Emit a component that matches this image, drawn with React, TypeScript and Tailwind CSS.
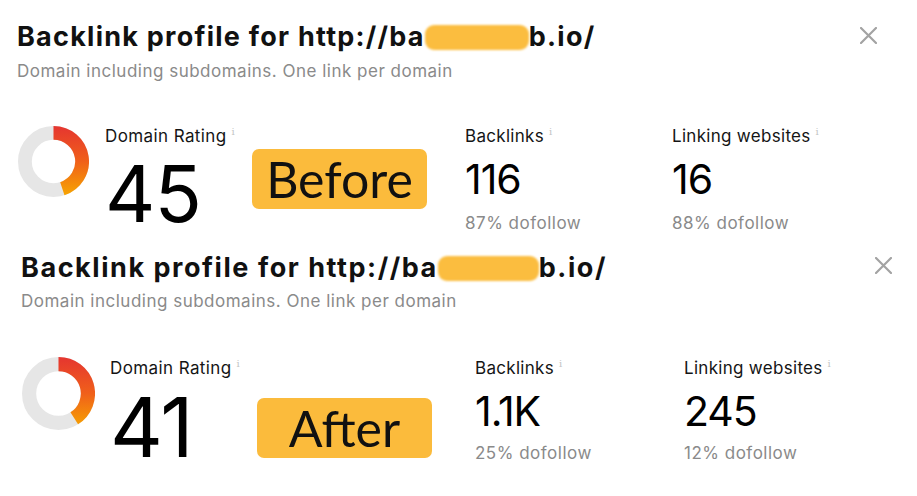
type Metric = {
  label: string;
  value: string;
  note: string;
};

type PanelConfig = {
  rating: number;
  tag: string;
  metrics: Metric[];
  wrap: string;
  title: string;
  close: string;
  blob: string;
  sub: string;
  grid: string;
  donut: number;
  donutOffset: string;
  bigNumber: string;
  badge: string;
  value: string;
  note: string;
};

const PANELS: PanelConfig[] = [
  {
    rating: 45,
    tag: "Before",
    metrics: [
      { label: "Backlinks", value: "116", note: "87% dofollow" },
      { label: "Linking websites", value: "16", note: "88% dofollow" },
    ],
    wrap: "h-[231px] pl-[17px] pr-[40px] pt-[21px]",
    title: "tracking-[1.25px]",
    close: "mt-[6px]",
    blob: "w-[104px]",
    sub: "mt-[6px]",
    grid: "mt-[41px] grid-cols-[88px_147px_213px_207px_1fr]",
    donut: 71,
    donutOffset: "mt-[2px]",
    bigNumber: "mt-[7px] text-[78px]",
    badge: "mt-[25px] h-[60px] w-[175px]",
    value: "mt-[11px]",
    note: "mt-[11px]",
  },
  {
    rating: 41,
    tag: "After",
    metrics: [
      { label: "Backlinks", value: "1.1K", note: "25% dofollow" },
      { label: "Linking websites", value: "245", note: "12% dofollow" },
    ],
    wrap: "h-[265px] pl-[21px] pr-[25px] pt-[21px]",
    title: "tracking-[1.55px]",
    close: "mt-[5px]",
    blob: "w-[101px]",
    sub: "mt-[5px]",
    grid: "mt-[43px] grid-cols-[89px_147px_218px_209px_1fr]",
    donut: 73,
    donutOffset: "mt-[1px]",
    bigNumber: "mt-[7px] text-[82px]",
    badge: "mt-[42px] h-[60px] w-[175px]",
    value: "mt-[11px]",
    note: "mt-[9px]",
  },
];

// rating ring: grey track with a red→amber arc running clockwise from 12 o'clock
function Donut({ value, size, className }: { value: number; size: number; className: string }) {
  const r = 29;
  const a = (value / 100) * 2 * Math.PI;
  const x = 36 + r * Math.sin(a);
  const y = 36 - r * Math.cos(a);
  const large = value > 50 ? 1 : 0;
  const id = `dr-grad-${value}`;
  return (
    <svg width={size} height={size} viewBox="0 0 72 72" className={`ml-px block ${className}`}>
      <defs>
        <linearGradient id={id} gradientUnits="userSpaceOnUse" x1="36" y1="0" x2="36" y2="72">
          <stop offset="0%" stopColor="#e53530" />
          <stop offset="50%" stopColor="#f0601a" />
          <stop offset="100%" stopColor="#f7a800" />
        </linearGradient>
      </defs>
      <circle cx="36" cy="36" r={r} fill="none" stroke="#e6e6e6" strokeWidth="14" />
      <path
        d={`M36 ${36 - r} A${r} ${r} 0 ${large} 1 ${x.toFixed(2)} ${y.toFixed(2)}`}
        fill="none"
        stroke={`url(#${id})`}
        strokeWidth="14"
      />
    </svg>
  );
}

function InfoMark() {
  return (
    <span className="ml-[5px] inline-block translate-y-[3px] align-top font-['DejaVu_Serif',serif] text-[10px] leading-none text-[#c4c4c4]">
      i
    </span>
  );
}

function CloseIcon({ className }: { className: string }) {
  return (
    <svg width="17" height="17" viewBox="0 0 17 17" className={`shrink-0 ${className}`}>
      <path d="M1 1L16 16M16 1L1 16" stroke="#a3a3a3" strokeWidth="2.2" strokeLinecap="round" />
    </svg>
  );
}

function Panel({ p }: { p: PanelConfig }) {
  return (
    <section className={`flex flex-col ${p.wrap}`}>
      <div className="flex items-start justify-between">
        <h2 className={`flex items-center text-[27px] font-bold leading-[32px] text-[#111] ${p.title}`}>
          <span>Backlink profile for http://ba</span>
          <span className={`inline-block h-[25px] rounded-[9px] bg-[#fbbd3f] blur-[1.3px] ${p.blob}`} />
          <span>b.io/</span>
        </h2>
        <CloseIcon className={p.close} />
      </div>
      <p className={`text-[17px] leading-[24px] tracking-[0.5px] text-[#8a8a8a] ${p.sub}`}>
        Domain including subdomains. One link per domain
      </p>

      <div className={`grid items-start ${p.grid}`}>
        <Donut value={p.rating} size={p.donut} className={p.donutOffset} />

        <div className="flex flex-col">
          <span className="text-[17px] leading-[24px] tracking-[0.4px] text-[#151515]">
            Domain Rating
            <InfoMark />
          </span>
          <span className={`leading-none tracking-[-1px] text-black ${p.bigNumber}`}>{p.rating}</span>
        </div>

        <div
          className={`flex items-center justify-center rounded-[7px] bg-[#fbbb3c] font-['Lato',sans-serif] text-[50px] leading-none text-[#111] ${p.badge}`}
        >
          {p.tag}
        </div>

        {p.metrics.map((m) => (
          <div key={m.label} className="flex flex-col">
            <span className="text-[17px] leading-[24px] tracking-[0.3px] text-[#151515]">
              {m.label}
              <InfoMark />
            </span>
            <span className={`text-[41px] leading-[41px] tracking-[-1px] text-black ${p.value}`}>{m.value}</span>
            <span className={`text-[17px] leading-[24px] tracking-[0.5px] text-[#8a8a8a] ${p.note}`}>{m.note}</span>
          </div>
        ))}
      </div>
    </section>
  );
}

export default function App() {
  return (
    <div className="h-[496px] w-[917px] overflow-hidden bg-white font-['Inter',sans-serif]">
      {PANELS.map((p) => (
        <Panel key={p.tag} p={p} />
      ))}
    </div>
  );
}
